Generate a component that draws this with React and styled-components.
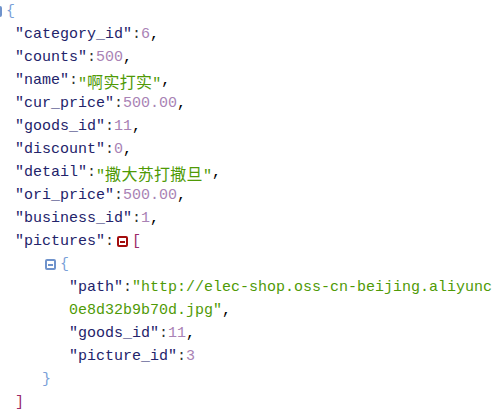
import React from 'react';
import styled, { createGlobalStyle } from 'styled-components';

const GlobalStyle = createGlobalStyle`
  html, body {
    margin: 0;
    padding: 0;
    background: #fff;
    overflow: hidden;
  }
`;

const STEP = 27;
const BASE = -12;

const Viewer = styled.div`
  width: 492px;
  height: 413px;
  overflow: hidden;
  font-family: 'Liberation Mono', 'Courier New', 'Noto Sans CJK SC', monospace;
  font-size: 15px;
  color: #333;
`;

const Row = styled.div`
  display: flex;
  align-items: center;
  height: 23px;
  white-space: nowrap;
  margin-left: ${(p) => BASE + p.$depth * STEP}px;
`;

const Key = styled.span`
  color: #23236a;
`;
const Colon = styled.span`
  color: #333;
`;
const Num = styled.span`
  color: #a982b5;
`;
const Str = styled.span`
  color: #4f9a06;
`;
const Han = styled.span`
  font-family: 'Noto Sans CJK SC', sans-serif;
  font-size: 16px;
  letter-spacing: 0.3px;
`;
const Comma = styled.span`
  color: #000;
`;
const Brace = styled.span`
  color: ${(p) => p.$color};
`;

const Toggle = styled.span`
  box-sizing: border-box;
  display: inline-flex;
  align-items: center;
  justify-content: center;
  width: 11px;
  height: 11px;
  margin: 0 4px 0 3px;
  border: 2px solid ${(p) => p.$color};
  border-radius: 2px;
  flex: none;

  &::after {
    content: '';
    width: 5px;
    height: 2px;
    background: ${(p) => p.$color};
  }
`;

const fields = [
  ['category_id', 6],
  ['counts', 500],
  ['name', '啊实打实'],
  ['cur_price', '500.00', true],
  ['goods_id', 11],
  ['discount', 0],
  ['detail', '撒大苏打撒旦'],
  ['ori_price', '500.00', true],
  ['business_id', 1],
];

const Field = ({ depth, name, value, numeric, last }) => {
  const isNum = typeof value === 'number' || numeric;
  return (
    <Row $depth={depth}>
      <Key>"{name}"</Key>
      <Colon>:</Colon>
      {isNum ? (
        <Num>{value}</Num>
      ) : (
        <Str>
          "<Han>{value}</Han>"
        </Str>
      )}
      {!last && <Comma>,</Comma>}
    </Row>
  );
};

const BLUE = '#6f93cc';
const RED = '#a30d0d';

const App = () => {
  return (
    <Viewer>
      <GlobalStyle />
      <Row $depth={0}>
        <Toggle $color={BLUE} />
        <Brace $color="#7a9fd8">{'{'}</Brace>
      </Row>
      {fields.map(([name, value, numeric]) => (
        <Field key={name} depth={1} name={name} value={value} numeric={numeric} />
      ))}
      <Row $depth={1}>
        <Key>"pictures"</Key>
        <Colon>:</Colon>
        <Toggle $color={RED} />
        <Brace $color="#9b2a6b">[</Brace>
      </Row>
      <Row $depth={2}>
        <Toggle $color={BLUE} />
        <Brace $color="#7a9fd8">{'{'}</Brace>
      </Row>
      <Row $depth={3}>
        <Key>"path"</Key>
        <Colon>:</Colon>
        <Str>"http://elec-shop.oss-cn-beijing.aliyunc</Str>
      </Row>
      <Row $depth={3}>
        <Str>0e8d32b9b70d.jpg"</Str>
        <Comma>,</Comma>
      </Row>
      <Field depth={3} name="goods_id" value={11} />
      <Field depth={3} name="picture_id" value={3} last />
      <Row $depth={2}>
        <Brace $color="#7a9fd8">{'}'}</Brace>
      </Row>
      <Row $depth={1}>
        <Brace $color="#9b2a6b">]</Brace>
      </Row>
    </Viewer>
  );
};

export default App;
